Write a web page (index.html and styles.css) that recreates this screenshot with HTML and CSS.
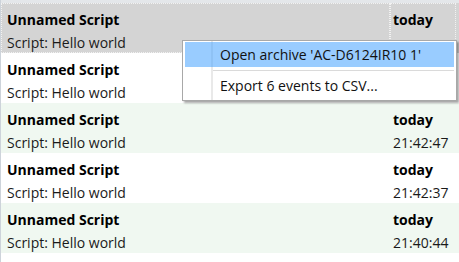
FILE: index.html
```html
<!DOCTYPE html>
<html>
  <head>
    <link rel="stylesheet" href="styles.css">
  </head>
  <body>
    <div class="events">
      <div class="top-strip"></div>
      <div class="row selected">
        <div class="cell main">
          <div class="title">Unnamed Script</div>
          <div class="sub">Script: Hello world</div>
        </div>
        <div class="cell time">
          <div class="title">today</div>
          <div class="sub"></div>
        </div>
      </div>
      <div class="row">
        <div class="cell main">
          <div class="title">Unnamed Script</div>
          <div class="sub">Script: Hello world</div>
        </div>
        <div class="cell time"></div>
      </div>
      <div class="row alt">
        <div class="cell main">
          <div class="title">Unnamed Script</div>
          <div class="sub">Script: Hello world</div>
        </div>
        <div class="cell time">
          <div class="title">today</div>
          <div class="sub">21:42:47</div>
        </div>
      </div>
      <div class="row">
        <div class="cell main">
          <div class="title">Unnamed Script</div>
          <div class="sub">Script: Hello world</div>
        </div>
        <div class="cell time">
          <div class="title">today</div>
          <div class="sub">21:42:37</div>
        </div>
      </div>
      <div class="row alt">
        <div class="cell main">
          <div class="title">Unnamed Script</div>
          <div class="sub">Script: Hello world</div>
        </div>
        <div class="cell time">
          <div class="title">today</div>
          <div class="sub">21:40:44</div>
        </div>
      </div>
    </div>

    <div class="menu">
      <div class="item active">Open archive 'AC-D6124IR10 1'</div>
      <div class="sep"></div>
      <div class="item">Export 6 events to CSV...</div>
    </div>
  </body>
</html>
```

FILE: styles.css
```css
body {
  margin: 0;
  height: 262px;
  overflow: hidden;
  background: #fff;
  font-family: "Open Sans", "Noto Sans", sans-serif;
  font-size: 14px;
  color: #1a1a1a;
}
.events {
  height: 262px;
  border-left: 1px solid #cdd3da;
}
.top-strip {
  height: 3px;
  background: #e4e7ea;
}
.row {
  display: flex;
  height: 50px;
  padding-right: 3px;
  background: #fff;
}
.row.alt {
  background: #f0f8f1;
}
.row.selected {
  background: #d4d4d4;
}
.cell {
  box-sizing: border-box;
  padding-top: 5px;
  line-height: 23px;
}
.main {
  flex: 1;
  padding-left: 6px;
}
.time {
  width: 66px;
  padding-left: 3px;
}
.selected .cell {
  outline: 1px dotted #f2f2f2;
  outline-offset: -1px;
}
.title {
  font-weight: bold;
  color: #000;
}
.sub {
  height: 23px;
}

.menu {
  position: absolute;
  left: 182px;
  top: 40px;
  width: 269px;
  padding: 1px 2px 2px;
  border: 1px solid #a8a8a8;
  background: linear-gradient(to right, #fff 28px, #e9e9e9 28px, #e9e9e9 30px, #fff 30px);
  box-shadow: 2px 2px 2px rgba(0, 0, 0, 0.35);
}
.item {
  height: 25px;
  line-height: 26px;
  padding-left: 35px;
  color: #111;
  white-space: nowrap;
}
.item.active {
  background: linear-gradient(to right, #99ccff 26px, #8fc2f5 26px, #8fc2f5 28px, #99ccff 28px);
}
.sep {
  height: 0;
  padding-top: 1px;
  margin: 2px 0 2px 28px;
  border-bottom: 1px solid #dadada;
}
```
